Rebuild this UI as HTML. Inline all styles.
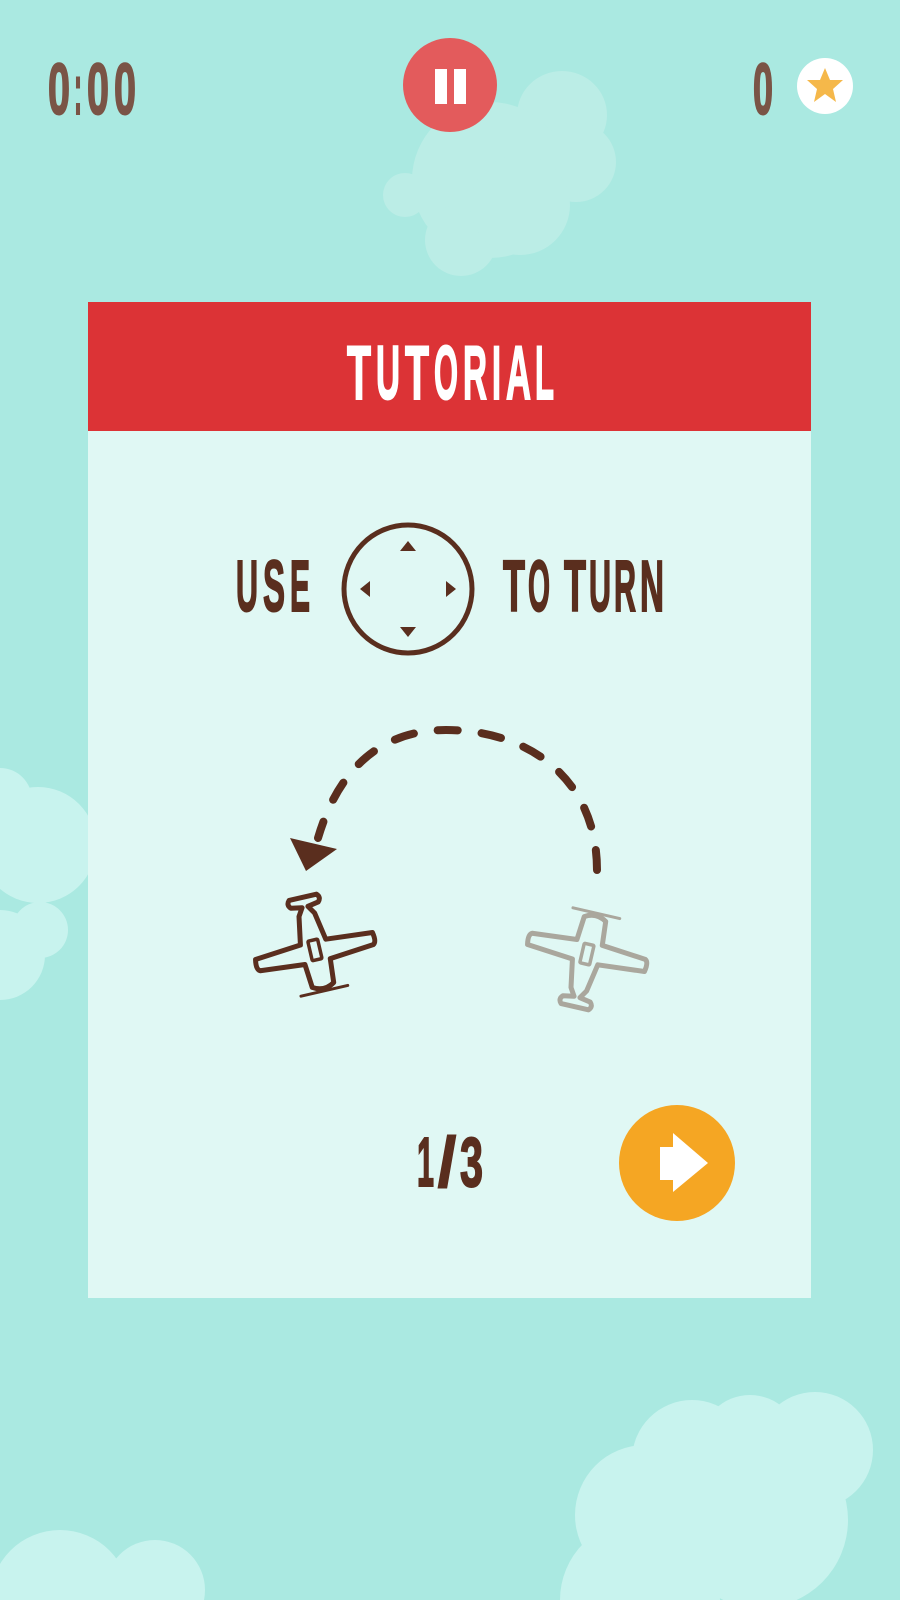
<!DOCTYPE html>
<html><head><meta charset="utf-8"><style>
html,body{margin:0;padding:0;width:900px;height:1600px;overflow:hidden;background:#aae9e1}
svg{display:block}
text{font-family:"Liberation Sans",sans-serif;font-weight:bold}
</style></head><body>
<svg width="900" height="1600" viewBox="0 0 900 1600" xmlns="http://www.w3.org/2000/svg">
<rect width="900" height="1600" fill="#aae9e1"/>
<g fill="#bbede6">
<ellipse cx="562" cy="115" rx="45" ry="44"/>
<circle cx="490" cy="180" r="78"/>
<circle cx="576" cy="162" r="40"/>
<circle cx="461" cy="240" r="36"/>
<circle cx="405" cy="195" r="22"/>
<circle cx="520" cy="205" r="50"/>
</g>
<g fill="#c8f3ee">
<circle cx="0" cy="800" r="32"/>
<circle cx="38" cy="845" r="58"/>
<circle cx="40" cy="930" r="28"/>
<circle cx="0" cy="955" r="45"/>
</g>
<g fill="#c8f3ee">
<circle cx="692" cy="1460" r="60"/>
<circle cx="750" cy="1445" r="50"/>
<circle cx="815" cy="1450" r="58"/>
<circle cx="645" cy="1515" r="70"/>
<circle cx="760" cy="1520" r="88"/>
<circle cx="640" cy="1600" r="80"/>
</g>
<g fill="#c8f3ee">
<circle cx="60" cy="1600" r="70"/>
<circle cx="155" cy="1590" r="50"/>
</g>
<g font-size="72" fill="#7a5446" stroke="#7a5446" stroke-width="2">
<text x="48" y="114" textLength="22" lengthAdjust="spacingAndGlyphs">0</text>
<text x="74" y="114" textLength="8" lengthAdjust="spacingAndGlyphs">:</text>
<text x="87" y="114" textLength="22" lengthAdjust="spacingAndGlyphs">0</text>
<text x="114" y="114" textLength="22" lengthAdjust="spacingAndGlyphs">0</text>
<text x="753" y="114" textLength="20" lengthAdjust="spacingAndGlyphs">0</text>
</g>
<circle cx="450" cy="85" r="47" fill="#e35b5c"/>
<rect x="435" y="69" width="12" height="35" fill="#fff"/>
<rect x="454" y="69" width="12" height="35" fill="#fff"/>
<circle cx="825" cy="86" r="28" fill="#fff"/>
<polygon fill="#f5b84a" points="825,68 830,80 843,80 833,89 836,102 825,94 814,102 817,89 807,80 820,80"/>
<rect x="88" y="302" width="723" height="996" fill="#e0f8f4"/>
<rect x="88" y="302" width="723" height="129" fill="#dc3336"/>
<g font-size="76" fill="#fff" stroke="#fff" stroke-width="2">
<text x="347" y="399" textLength="24" lengthAdjust="spacingAndGlyphs">T</text>
<text x="376" y="399" textLength="24" lengthAdjust="spacingAndGlyphs">U</text>
<text x="405" y="399" textLength="24" lengthAdjust="spacingAndGlyphs">T</text>
<text x="434" y="399" textLength="24" lengthAdjust="spacingAndGlyphs">O</text>
<text x="463" y="399" textLength="24" lengthAdjust="spacingAndGlyphs">R</text>
<text x="492" y="399" textLength="9" lengthAdjust="spacingAndGlyphs">I</text>
<text x="506" y="399" textLength="25" lengthAdjust="spacingAndGlyphs">A</text>
<text x="535" y="399" textLength="19" lengthAdjust="spacingAndGlyphs">L</text>
</g>
<g font-size="72" fill="#5a2e1e" stroke="#5a2e1e" stroke-width="2">
<text x="236" y="611" textLength="22" lengthAdjust="spacingAndGlyphs">U</text>
<text x="263" y="611" textLength="22" lengthAdjust="spacingAndGlyphs">S</text>
<text x="290" y="611" textLength="20" lengthAdjust="spacingAndGlyphs">E</text>
<text x="503" y="611" textLength="22" lengthAdjust="spacingAndGlyphs">T</text>
<text x="528" y="611" textLength="22" lengthAdjust="spacingAndGlyphs">O</text>
<text x="564" y="611" textLength="22" lengthAdjust="spacingAndGlyphs">T</text>
<text x="589" y="611" textLength="22" lengthAdjust="spacingAndGlyphs">U</text>
<text x="614" y="611" textLength="22" lengthAdjust="spacingAndGlyphs">R</text>
<text x="640" y="611" textLength="24" lengthAdjust="spacingAndGlyphs">N</text>
</g>
<circle cx="408" cy="589" r="64" fill="none" stroke="#5a2e1e" stroke-width="5"/>
<g fill="#5a2e1e">
<polygon points="408,541 400,551 416,551"/>
<polygon points="408,637 400,627 416,627"/>
<polygon points="360,589 370,581 370,597"/>
<polygon points="456,589 446,581 446,597"/>
</g>
<path d="M597,870 C597,780 530,730 446,730 C380,730 338,770 318,838" fill="none" stroke="#5a2e1e" stroke-width="8" stroke-linecap="round" stroke-dasharray="20 24"/>
<polygon points="306,871 290,838 337,849" fill="#5a2e1e"/>
<defs>
<g id="plane">
<path d="M-11,-40 Q0,-47 11,-40 L13,-16 L58,-12 Q62,-10 60,0 L13,4 L8,32 L3,40 L14,42 Q18,46 14,50 L-14,50 Q-18,46 -14,42 L-3,40 L-8,32 L-13,4 L-60,0 Q-62,-10 -58,-12 L-13,-16 Z" fill="none" stroke-width="5" stroke-linejoin="round"/>
<rect x="-5" y="-14" width="10" height="20" rx="1" fill="none" stroke-width="3.5"/>
<path d="M-24,-46 L24,-46" stroke-width="3" stroke-linecap="round"/>
</g>
</defs>
<use href="#plane" stroke="#5a2e1e" transform="translate(314,946) rotate(167)"/>
<use href="#plane" stroke="#aaa79d" transform="translate(586,958) rotate(13)"/>
<g font-size="70" fill="#5a2e1e" stroke="#5a2e1e" stroke-width="2">
<text x="417" y="1186" textLength="17" lengthAdjust="spacingAndGlyphs">1</text>
<text x="438" y="1186" textLength="18" lengthAdjust="spacingAndGlyphs">/</text>
<text x="460" y="1186" textLength="23" lengthAdjust="spacingAndGlyphs">3</text>
</g>
<circle cx="677" cy="1163" r="58" fill="#f5a623"/>
<path d="M660,1147 L673,1147 L673,1133 L708,1163 L673,1192 L673,1180 L660,1180 Z" fill="#fff"/>
</svg>
</body></html>
